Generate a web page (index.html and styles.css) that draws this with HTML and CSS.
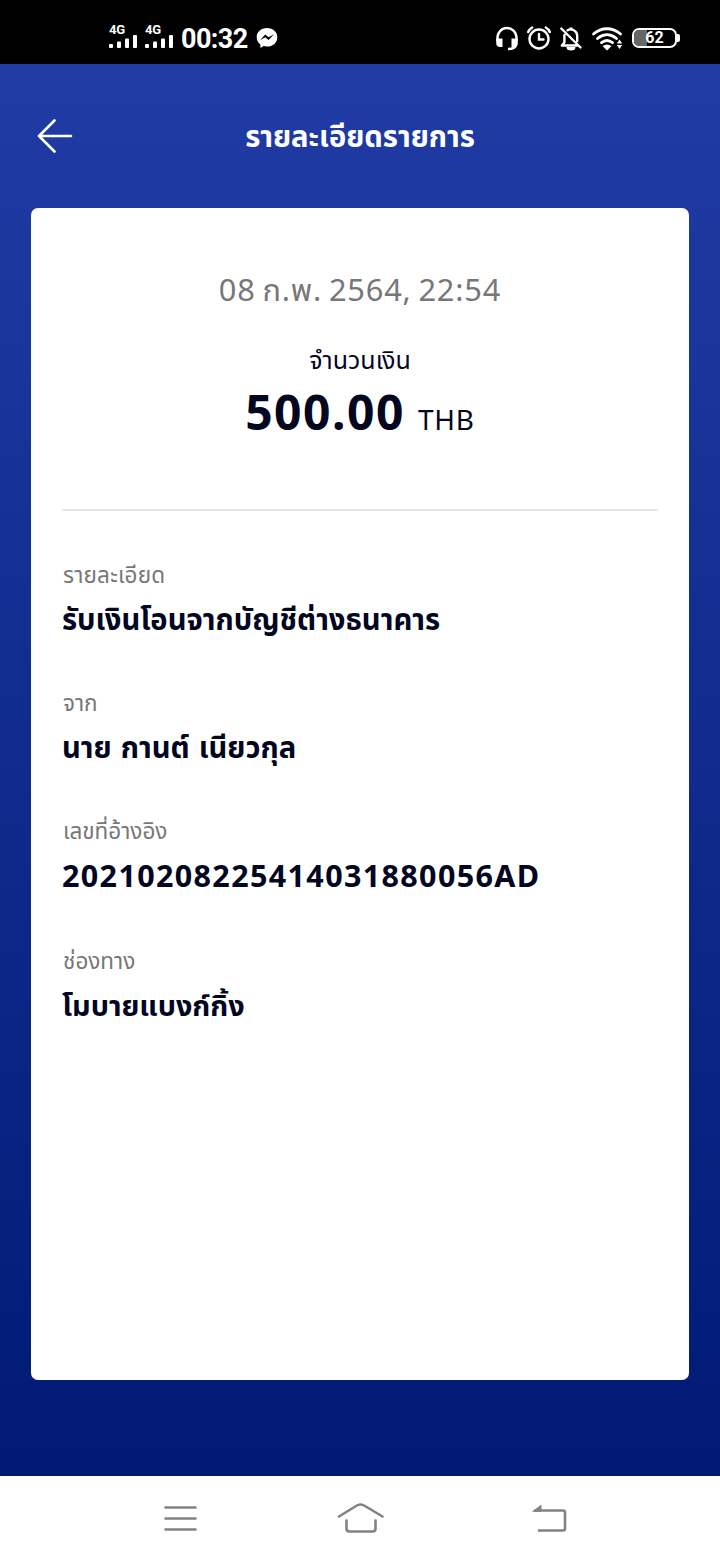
FILE: index.html
```html
<!DOCTYPE html>
<html lang="th">
<head>
<meta charset="utf-8">
<title>รายละเอียดรายการ</title>
<link rel="stylesheet" href="styles.css">
</head>
<body>
<div class="phone">
  <div class="status">
    <div class="status-left">
      <div class="signal"><span class="net">4G</span><svg width="29" height="14" viewBox="0 0 29 14" fill="#fff"><rect x="0" y="9" width="4" height="4" rx="1"/><rect x="8" y="6.500" width="4" height="6.500" rx="1"/><rect x="16" y="3.500" width="4" height="9.500" rx="1"/><rect x="24" y="0" width="4" height="13" rx="1"/></svg></div>
      <div class="signal"><span class="net">4G</span><svg width="29" height="14" viewBox="0 0 29 14" fill="#fff"><rect x="0" y="9" width="4" height="4" rx="1"/><rect x="8" y="6.500" width="4" height="6.500" rx="1"/><rect x="16" y="3.500" width="4" height="9.500" rx="1"/><rect x="24" y="0" width="4" height="13" rx="1"/></svg></div>
      <span class="time">00:32</span>
      <svg class="messenger" width="22" height="22" viewBox="0 0 22 22"><path d="M11 1C5 1 .7 5 .7 10.200c0 3 1.400 5.500 3.700 7.200V21l3.200-1.900c1 .3 2.200.5 3.400.5 6 0 10.300-4.200 10.300-9.400S17 1 11 1Z" fill="#fff"/><path d="m4 13.200 5.300-5.800 3.200 2.800 5.500-3-5.500 5.800-3.200-2.800Z" fill="#000"/></svg>
    </div>
    <div class="status-right">
      <svg width="24" height="26" viewBox="0 0 24 26" fill="none" stroke="#fff" stroke-width="2.400"><path d="M2.500 15v-3.500a9.500 9.500 0 0 1 19 0V15M21.300 18c-.5 3.800-3 5-8.300 5"/><path d="M1.200 12.500H7.500v8.500H5.200a4 4 0 0 1-4-4zM22.800 12.500h-6.300v8.500h2.300a4 4 0 0 0 4-4z" fill="#fff" stroke="none"/></svg>
      <svg width="24" height="26" viewBox="0 0 24 26" fill="none" stroke="#fff" stroke-width="2.400" stroke-linecap="round"><circle cx="12" cy="13" r="9.500"/><path d="M12 8v5.500h4.500M1.200 6c.8-2 2-3.400 4-4.500M22.800 6c-.8-2-2-3.400-4-4.500"/></svg>
      <svg width="24" height="26" viewBox="0 0 24 26" fill="none" stroke="#fff" stroke-width="2.400" stroke-linecap="round" stroke-linejoin="round"><path d="M2.300 2.500 21.500 21.500M8.500 4.300A6.500 6.500 0 0 1 18.200 9.500v5.500M5.400 9v7.500L2.800 19.500H18"/><path d="M7.500 21h9a4.500 3.500 0 0 1-9 0ZM10.500 1.500h3v2.500h-3z" fill="#fff" stroke="none"/></svg>
      <svg class="wifi" width="32" height="26" viewBox="0 0 32 26" fill="none" stroke="#fff" stroke-width="2.800" stroke-linecap="round"><path d="M2.500 8c8-7 19-7 27 0M6.500 12.500c6-5 13-5 19 0M10.500 16.700c3.500-2.800 7.500-2.800 11 0"/><path d="M11.500 20q4.500-3 9 0L16 24.500ZM28.500 13.500l2.700 4h-5.400zM28.500 23l2.700-4h-5.400z" fill="#fff" stroke="none"/></svg>
      <div class="battery"><div class="charge"></div><span class="pct">62</span></div><div class="tip"></div>
    </div>
  </div>
  <div class="app">
    <div class="header">
      <svg class="back" width="36" height="36" viewBox="0 0 36 36" fill="none" stroke="#fff" stroke-width="2.600" stroke-linecap="round" stroke-linejoin="round"><path d="M17.500 2.500 2 18l15.500 15.500M2 18h32"/></svg>
      <h1 class="title">รายละเอียดรายการ</h1>
    </div>
    <div class="card">
      <div class="date">08 ก.พ. 2564, 22:54</div>
      <div class="caption">จำนวนเงิน</div>
      <div class="sum"><span class="amount">500.00</span><span class="cur">THB</span></div>
      <div class="rule"></div>
      <div class="field"><div class="label wide">รายละเอียด</div><div class="value">รับเงินโอนจากบัญชีต่างธนาคาร</div></div>
      <div class="field"><div class="label">จาก</div><div class="value name">นาย กานต์ เนียวกุล</div></div>
      <div class="field ref"><div class="label">เลขที่อ้างอิง</div><div class="value number">20210208225414031880056AD</div></div>
      <div class="field"><div class="label">ช่องทาง</div><div class="value channel">โมบายแบงก์กิ้ง</div></div>
    </div>
  </div>
  <div class="nav">
    <svg width="34" height="28" viewBox="0 0 34 28" stroke="#828282" stroke-width="2.600" stroke-linecap="round"><path d="M2.500 3.500h30M2.500 14.500h30M2.500 25.500h30"/></svg>
    <svg class="home" width="48" height="32" viewBox="0 0 48 32" fill="none" stroke="#828282" stroke-width="2.600" stroke-linecap="round"><path d="M2 14.500 19 4q4.500-3 9 0L45.500 14.500M9.500 18.500v8q0 3 3 3h23q3 0 3-3v-8"/></svg>
    <svg width="36" height="30" viewBox="0 0 36 30" fill="none" stroke="#828282" stroke-width="2.600" stroke-linecap="round"><path d="M4 7.500h28q2 0 2 2v16q0 2-2 2H8"/><path d="M.8 8.800 10.500 1.500v7.300z" fill="#828282" stroke="none"/></svg>
  </div>
</div>
</body>
</html>
```
FILE: styles.css
```css
* { box-sizing: border-box; }
body { margin: 0; font-family: "Noto Sans", "Noto Sans Thai", "Open Sans", sans-serif; color: #02061f; }
svg { display: block; flex: none; }
.phone { width: 720px; height: 1560px; display: flex; flex-direction: column; overflow: hidden; white-space: nowrap; }
.status { height: 64px; background: #000; color: #fff; display: flex; justify-content: space-between; padding: 0 40px 0 109px; font-family: Roboto, sans-serif; }
.status-left, .status-right { display: flex; align-items: flex-start; }
.signal { width: 36px; padding-top: 23px; }
.net { display: block; height: 12px; line-height: 14px; font-size: 13px; font-weight: 700; letter-spacing: -.3px; }
.time { margin-top: 23px; width: 75px; line-height: 32px; font-size: 27px; font-weight: 700; letter-spacing: -.6px; }
.messenger { margin-top: 27px; }
.status-right { padding-top: 26px; }
.status-right svg { margin-right: 8px; }
.status-right .wifi { margin-right: 9px; }
.battery { position: relative; width: 45px; height: 20px; margin-top: 2px; border: 2px solid #fff; border-radius: 7px; overflow: hidden; }
.charge { width: 13px; height: 16px; background: #666; }
.pct { position: absolute; inset: 0; text-align: center; line-height: 16px; font-size: 16px; font-weight: 700; }
.tip { width: 3px; height: 8px; margin-top: 8px; background: #fff; border-radius: 0 2px 2px 0; }
.app { height: 1412px; padding: 0 31px; background: linear-gradient(#203ca5, #001a75); }
.header { height: 144px; display: grid; grid-template-columns: 48px 1fr 48px; align-items: center; }
.back { margin-left: 6px; }
.title { margin: 0; text-align: center; font-size: 29.200px; line-height: 40px; color: #fff; }
.card { height: 1172px; padding: 59px 32px 0; background: #fff; border-radius: 7px; }
.date { height: 44px; line-height: 44px; text-align: center; font-size: 30.800px; letter-spacing: .8px; word-spacing: -2px; color: #777; }
.caption { height: 36px; margin: 30px 0 3px; line-height: 36px; text-align: center; font-size: 25px; }
.sum { height: 64px; display: flex; justify-content: center; align-items: baseline; gap: 13px; line-height: 64px; }
.amount { font-size: 48px; font-weight: 700; letter-spacing: 1.500px; }
.cur { font-size: 28px; letter-spacing: .8px; }
.rule { height: 2px; margin: 65px -1px 47px; background: #e5e5e5; }
.field { height: 128px; }
.field.ref { height: 130px; }
.label { height: 34px; line-height: 34px; font-size: 22.500px; color: #777; }
.label.wide { letter-spacing: .2px; }
.value { height: 44px; margin: 5px 0 0 -1px; line-height: 44px; font-size: 29.200px; font-weight: 700; }
.value.name { word-spacing: 1.500px; }
.value.number { font-size: 30.500px; letter-spacing: 1.350px; }
.value.channel { font-size: 28.800px; }
.nav { height: 84px; background: #fff; display: flex; justify-content: space-between; align-items: center; padding: 0 153px 0 163px; }
.home { margin-right: 7px; }
```
